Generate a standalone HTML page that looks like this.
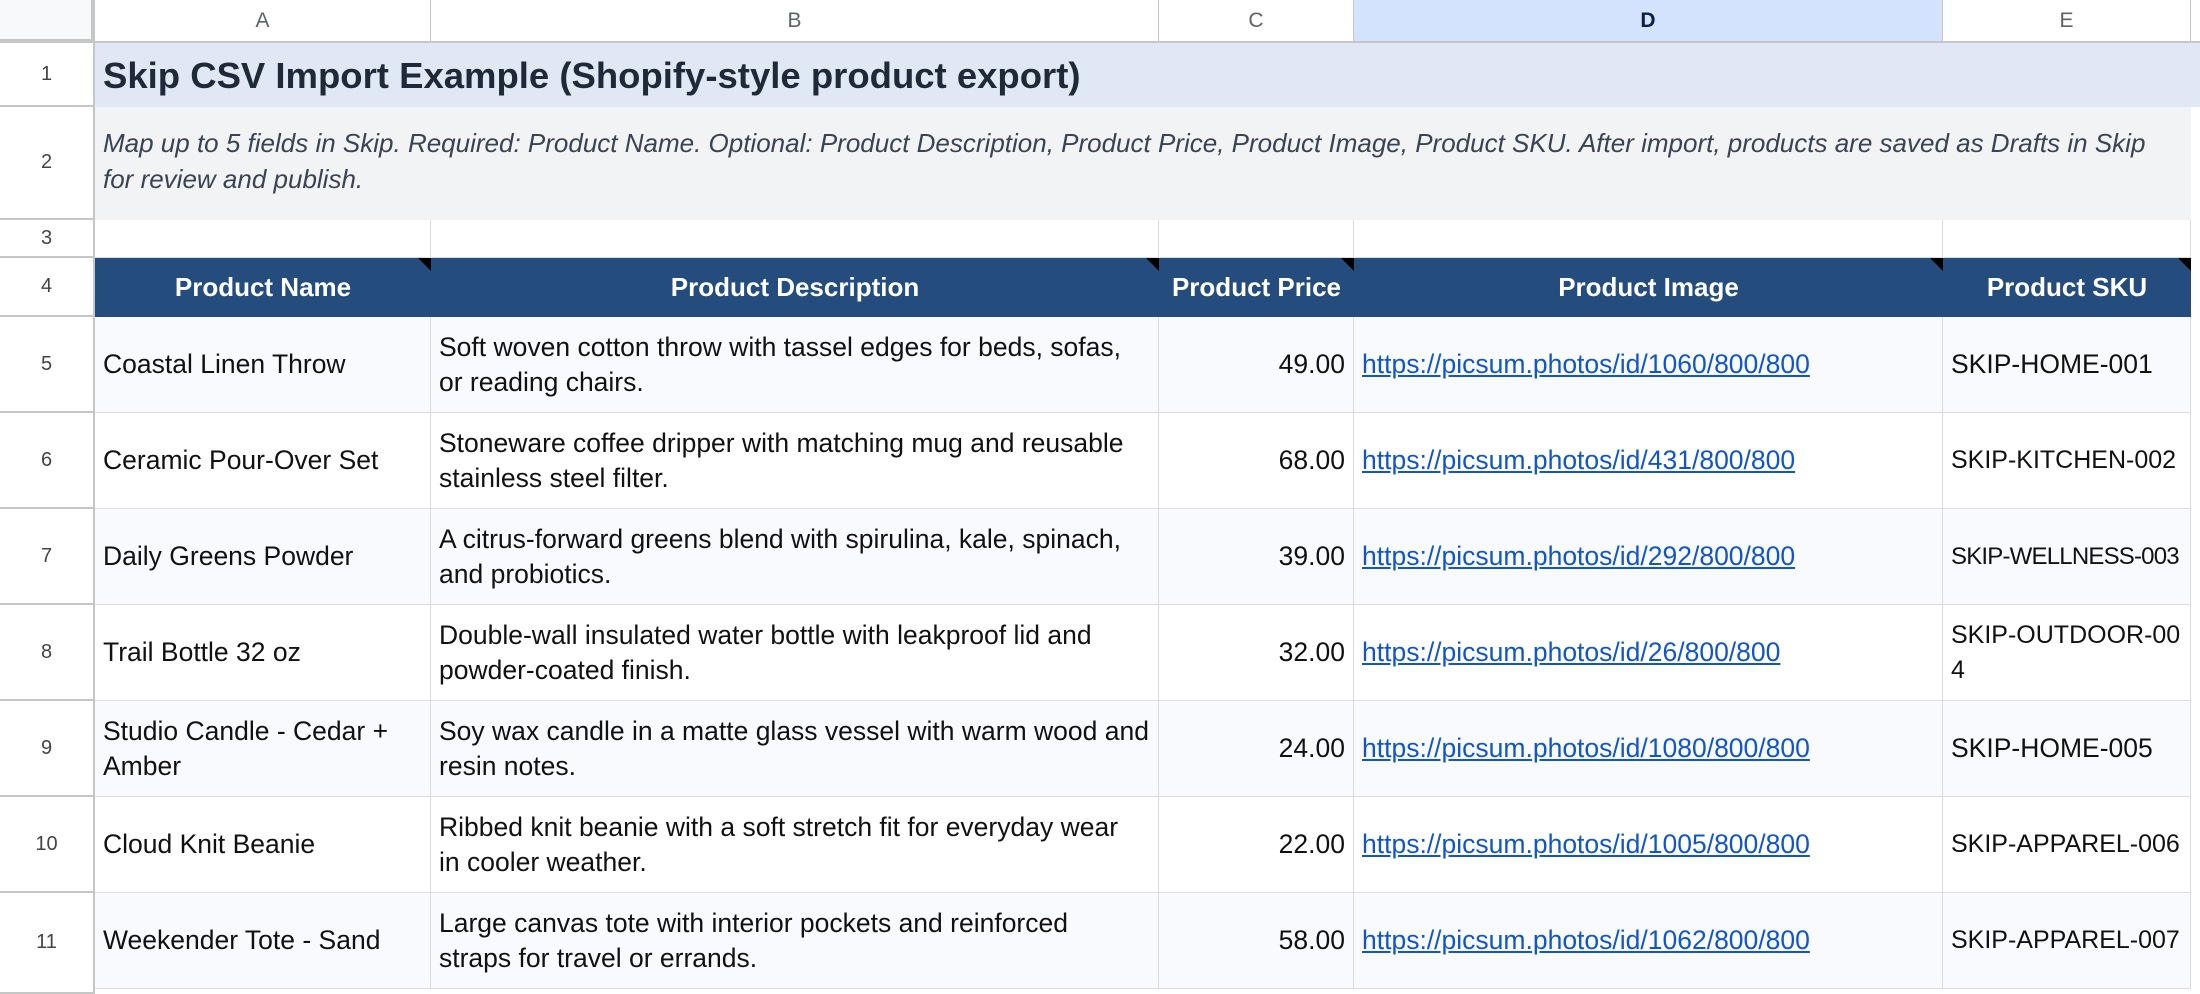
<!DOCTYPE html>
<html><head><meta charset="utf-8"><style>
*{margin:0;padding:0;box-sizing:border-box}
body{width:2200px;height:994px;overflow:hidden;background:#fff;font-family:"Liberation Sans",sans-serif;position:relative}
.c{position:absolute;display:flex;align-items:center;border-right:1px solid #dadce0;border-bottom:1px solid #dadce0;overflow:hidden;font-size:26.5px;color:#111;line-height:35px;padding:0 8px}
.h{justify-content:center;color:#5f6368;font-size:21px;background:#fff;border-right:1px solid #c4c7c5;border-bottom:2px solid #c4c7c5}
.rh{justify-content:center;color:#444;font-size:20px;background:#fff;border-right:2px solid #c4c7c5;border-bottom:2px solid #c4c7c5;padding:0}
.th{background:#244c7c;color:#fff;font-weight:bold;justify-content:center;border:none;font-size:26px}
.th::after{content:"";position:absolute;right:0;top:0;border-top:13px solid #000;border-left:13px solid transparent}
.r{justify-content:flex-end}
a{color:#1155cc;text-decoration:underline}
</style></head><body>
<div class="c h" style="left:0;top:0;width:95px;height:43px;background:#f8f9fa;border-right:4px solid #c4c7c5;border-bottom:4px solid #c4c7c5"></div>
<div class="c h" style="left:95px;top:0;width:336px;height:43px">A</div>
<div class="c h" style="left:431px;top:0;width:728px;height:43px">B</div>
<div class="c h" style="left:1159px;top:0;width:195px;height:43px">C</div>
<div class="c h" style="left:1354px;top:0;width:589px;height:43px;background:#d3e3fd;color:#0b1f44;font-weight:bold">D</div>
<div class="c h" style="left:1943px;top:0;width:248px;height:43px">E</div>
<div class="c h" style="left:2191px;top:0;width:9px;height:43px"></div>
<div class="c rh" style="left:0;top:43px;width:95px;height:64px">1</div>
<div class="c rh" style="left:0;top:107px;width:95px;height:113px">2</div>
<div class="c rh" style="left:0;top:220px;width:95px;height:38px">3</div>
<div class="c rh" style="left:0;top:258px;width:95px;height:59px">4</div>
<div class="c rh" style="left:0;top:317px;width:95px;height:96px">5</div>
<div class="c rh" style="left:0;top:413px;width:95px;height:96px">6</div>
<div class="c rh" style="left:0;top:509px;width:95px;height:96px">7</div>
<div class="c rh" style="left:0;top:605px;width:95px;height:96px">8</div>
<div class="c rh" style="left:0;top:701px;width:95px;height:96px">9</div>
<div class="c rh" style="left:0;top:797px;width:95px;height:96px">10</div>
<div class="c rh" style="left:0;top:893px;width:95px;height:101px">11</div>
<div class="c" style="left:95px;top:43px;width:2105px;height:64px;background:#dfe8f4;border:none;font-weight:bold;font-size:36.5px;color:#1f2937;padding-left:8px">Skip CSV Import Example (Shopify-style product export)</div>
<div class="c" style="left:95px;top:107px;width:2096px;height:113px;background:#f1f3f5;border:none;font-style:italic;font-size:26px;color:#3b4252;line-height:36px;padding-bottom:6px;white-space:nowrap"><div>Map up to 5 fields in Skip. Required: Product Name. Optional: Product Description, Product Price, Product Image, Product SKU. After import, products are saved as Drafts in Skip<br>for review and publish.</div></div>
<div class="c" style="left:95px;top:220px;width:336px;height:38px"></div>
<div class="c" style="left:431px;top:220px;width:728px;height:38px"></div>
<div class="c" style="left:1159px;top:220px;width:195px;height:38px"></div>
<div class="c" style="left:1354px;top:220px;width:589px;height:38px"></div>
<div class="c" style="left:1943px;top:220px;width:248px;height:38px"></div>
<div class="c th" style="left:95px;top:258px;width:336px;height:59px">Product Name</div>
<div class="c th" style="left:431px;top:258px;width:728px;height:59px">Product Description</div>
<div class="c th" style="left:1159px;top:258px;width:195px;height:59px">Product Price</div>
<div class="c th" style="left:1354px;top:258px;width:589px;height:59px">Product Image</div>
<div class="c th" style="left:1943px;top:258px;width:248px;height:59px">Product SKU</div>

<div class="c" style="left:95px;top:317px;width:336px;height:96px;background:#f8fafd">Coastal Linen Throw</div>
<div class="c" style="left:431px;top:317px;width:728px;height:96px;background:#f8fafd">Soft woven cotton throw with tassel edges for beds, sofas, or reading chairs.</div>
<div class="c r" style="left:1159px;top:317px;width:195px;height:96px;background:#f8fafd">49.00</div>
<div class="c" style="left:1354px;top:317px;width:589px;height:96px;background:#f8fafd"><a>https://picsum.photos/id/1060/800/800</a></div>
<div class="c" style="left:1943px;top:317px;width:248px;height:96px;background:#f8fafd">SKIP-HOME-001</div>

<div class="c" style="left:95px;top:413px;width:336px;height:96px">Ceramic Pour-Over Set</div>
<div class="c" style="left:431px;top:413px;width:728px;height:96px">Stoneware coffee dripper with matching mug and reusable stainless steel filter.</div>
<div class="c r" style="left:1159px;top:413px;width:195px;height:96px">68.00</div>
<div class="c" style="left:1354px;top:413px;width:589px;height:96px"><a>https://picsum.photos/id/431/800/800</a></div>
<div class="c" style="left:1943px;top:413px;width:248px;height:96px;white-space:nowrap;font-size:25px">SKIP-KITCHEN-002</div>

<div class="c" style="left:95px;top:509px;width:336px;height:96px;background:#f8fafd">Daily Greens Powder</div>
<div class="c" style="left:431px;top:509px;width:728px;height:96px;background:#f8fafd">A citrus-forward greens blend with spirulina, kale, spinach, and probiotics.</div>
<div class="c r" style="left:1159px;top:509px;width:195px;height:96px;background:#f8fafd">39.00</div>
<div class="c" style="left:1354px;top:509px;width:589px;height:96px;background:#f8fafd"><a>https://picsum.photos/id/292/800/800</a></div>
<div class="c" style="left:1943px;top:509px;width:248px;height:96px;background:#f8fafd;padding-right:0;white-space:nowrap;font-size:24px;letter-spacing:-0.8px">SKIP-WELLNESS-003</div>

<div class="c" style="left:95px;top:605px;width:336px;height:96px">Trail Bottle 32 oz</div>
<div class="c" style="left:431px;top:605px;width:728px;height:96px">Double-wall insulated water bottle with leakproof lid and powder-coated finish.</div>
<div class="c r" style="left:1159px;top:605px;width:195px;height:96px">32.00</div>
<div class="c" style="left:1354px;top:605px;width:589px;height:96px"><a>https://picsum.photos/id/26/800/800</a></div>
<div class="c" style="left:1943px;top:605px;width:248px;height:96px;font-size:25px">SKIP-OUTDOOR-00<br>4</div>

<div class="c" style="left:95px;top:701px;width:336px;height:96px;background:#f8fafd">Studio Candle - Cedar + Amber</div>
<div class="c" style="left:431px;top:701px;width:728px;height:96px;background:#f8fafd">Soy wax candle in a matte glass vessel with warm wood and resin notes.</div>
<div class="c r" style="left:1159px;top:701px;width:195px;height:96px;background:#f8fafd">24.00</div>
<div class="c" style="left:1354px;top:701px;width:589px;height:96px;background:#f8fafd"><a>https://picsum.photos/id/1080/800/800</a></div>
<div class="c" style="left:1943px;top:701px;width:248px;height:96px;background:#f8fafd">SKIP-HOME-005</div>

<div class="c" style="left:95px;top:797px;width:336px;height:96px">Cloud Knit Beanie</div>
<div class="c" style="left:431px;top:797px;width:728px;height:96px"><div>Ribbed knit beanie with a soft stretch fit for everyday wear<br>in cooler weather.</div></div>
<div class="c r" style="left:1159px;top:797px;width:195px;height:96px">22.00</div>
<div class="c" style="left:1354px;top:797px;width:589px;height:96px"><a>https://picsum.photos/id/1005/800/800</a></div>
<div class="c" style="left:1943px;top:797px;width:248px;height:96px;white-space:nowrap;font-size:25px">SKIP-APPAREL-006</div>

<div class="c" style="left:95px;top:893px;width:336px;height:96px;background:#f8fafd">Weekender Tote - Sand</div>
<div class="c" style="left:431px;top:893px;width:728px;height:96px;background:#f8fafd"><div>Large canvas tote with interior pockets and reinforced<br>straps for travel or errands.</div></div>
<div class="c r" style="left:1159px;top:893px;width:195px;height:96px;background:#f8fafd">58.00</div>
<div class="c" style="left:1354px;top:893px;width:589px;height:96px;background:#f8fafd"><a>https://picsum.photos/id/1062/800/800</a></div>
<div class="c" style="left:1943px;top:893px;width:248px;height:96px;background:#f8fafd;white-space:nowrap;font-size:25px">SKIP-APPAREL-007</div>
</body></html>
